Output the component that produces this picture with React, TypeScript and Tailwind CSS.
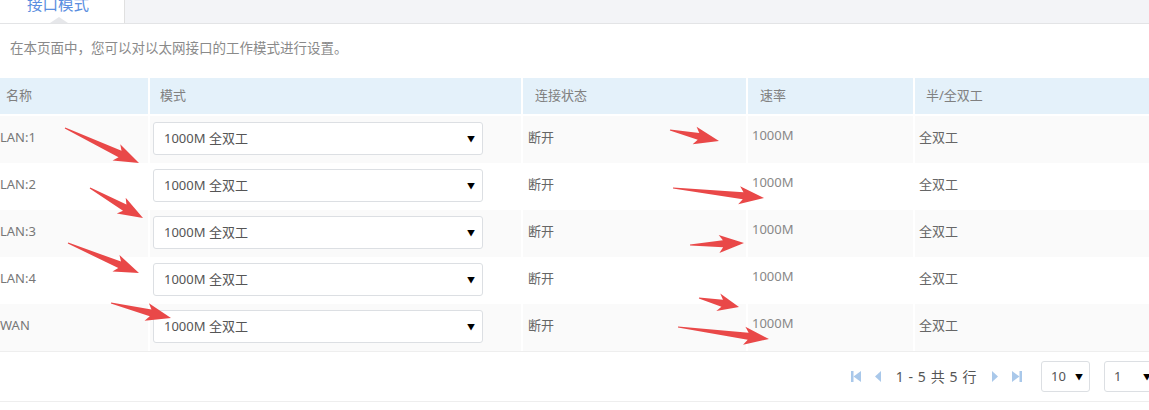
import React from "react";

const font = { fontFamily: '"Noto Sans", "Noto Sans CJK SC", sans-serif' };

const rows = ["LAN:1", "LAN:2", "LAN:3", "LAN:4", "WAN"];

// red annotation arrows drawn over the table: [tailX, tailY, tipX, tipY]
const arrows: [number, number, number, number][] = [
  [65, 128, 139, 163],
  [90, 188, 143, 218],
  [68, 243, 139, 273],
  [111, 303, 171, 318],
  [670, 130, 719, 141],
  [673, 188, 764, 198],
  [690, 245, 744, 243],
  [699, 298, 739, 307],
  [678, 327, 769, 339],
];

function arrowPoints(tx: number, ty: number, px: number, py: number) {
  const len = Math.hypot(px - tx, py - ty);
  const dx = (px - tx) / len;
  const dy = (py - ty) / len;
  const nx = -dy;
  const ny = dx;
  const h = Math.min(21, len * 0.42);
  const bx = px - dx * h;
  const by = py - dy * h;
  const cx = px - dx * (h + 4);
  const cy = py - dy * (h + 4);
  const pts = [
    [tx + nx * 0.6, ty + ny * 0.6],
    [bx + nx * 3.5, by + ny * 3.5],
    [cx + nx * 9, cy + ny * 9],
    [px, py],
    [cx - nx * 9, cy - ny * 9],
    [bx - nx * 3.5, by - ny * 3.5],
    [tx - nx * 0.6, ty - ny * 0.6],
  ];
  return pts.map(p => p.join(",")).join(" ");
}

function Select({ value, className }: { value: string; className: string }) {
  return (
    <div className={`flex items-center justify-between border border-[#dcdfe3] rounded-[3px] bg-white text-[13px] text-[#555] ${className}`}>
      <span>{value}</span>
      <span className="text-[8px] text-black">▼</span>
    </div>
  );
}

function PageIcon({ kind, className = "" }: { kind: "first" | "prev" | "next" | "last"; className?: string }) {
  const c = "#a9c8ea";
  return (
    <svg width="12" height="13" viewBox="0 0 12 13" className={className}>
      {kind === "first" && (
        <>
          <rect x="1" y="1" width="2.5" height="11" fill={c} />
          <polygon points="11,1 11,12 3.5,6.5" fill={c} />
        </>
      )}
      {kind === "prev" && <polygon points="9,1 9,12 3,6.5" fill={c} />}
      {kind === "next" && <polygon points="3,1 3,12 9,6.5" fill={c} />}
      {kind === "last" && (
        <>
          <rect x="8.5" y="1" width="2.5" height="11" fill={c} />
          <polygon points="1,1 1,12 8.5,6.5" fill={c} />
        </>
      )}
    </svg>
  );
}

export default function App() {
  return (
    <div className="relative w-[1149px] h-[410px] overflow-hidden bg-white" style={font}>
      {/* Tab bar */}
      <div className="flex h-[24px] bg-[#f3f4f7] border-b border-[#e3e4e6]">
        <div className="relative w-[125px] bg-white border-r border-[#e0e0e0] overflow-hidden">
          <div className="text-center text-[15.5px] leading-[20px] text-[#5a8ee0] -mt-[6px] pr-[8px]">接口模式</div>
          <div className="absolute left-[50px] bottom-0 w-0 h-0 border-x-[9px] border-x-transparent border-b-[6px] border-b-[#e6e7ea]" />
        </div>
      </div>

      <div className="pl-[10px] pt-[14px] h-[54px] text-[13.5px] text-[#8a8a8a]">在本页面中，您可以对以太网接口的工作模式进行设置。</div>

      {/* Table */}
      <div className="grid grid-cols-[148px_371px_223px_165px_1fr] gap-x-[2px] w-[1153px] text-[13px] text-[#666]">
        <div className="h-[36px] bg-[#e4f1fa] flex items-center pl-[6px] text-[#808080]">名称</div>
        <div className="h-[36px] bg-[#e4f1fa] flex items-center pl-[10px] text-[#808080]">模式</div>
        <div className="h-[36px] bg-[#e4f1fa] flex items-center pl-[12px] text-[#808080]">连接状态</div>
        <div className="h-[36px] bg-[#e4f1fa] flex items-center pl-[12px] text-[#808080]">速率</div>
        <div className="h-[36px] bg-[#e4f1fa] flex items-center pl-[11px] text-[#808080]">半/全双工</div>
        {rows.map((name, i) => {
          const bg = i % 2 === 0 ? "bg-[#fafafa]" : "bg-white";
          const top = i === 0 ? "mt-[2px]" : "";
          return (
            <React.Fragment key={name}>
              <div className={`h-[47px] ${bg} ${top} pt-[11px] leading-[20px] text-[#777]`}>{name}</div>
              <div className={`h-[47px] ${bg} ${top} pt-[6px] pl-[3px]`}>
                <Select value="1000M 全双工" className="w-[330px] h-[33px] pl-[10px] pr-[7px]" />
              </div>
              <div className={`h-[47px] ${bg} ${top} pt-[11px] pl-[5px] leading-[20px] text-[#666]`}>断开</div>
              <div className={`h-[47px] ${bg} ${top} pt-[9px] pl-[4px] leading-[20px] text-[#888]`}>1000M</div>
              <div className={`h-[47px] ${bg} ${top} pt-[11px] pl-[4px] leading-[20px] text-[#666]`}>全双工</div>
            </React.Fragment>
          );
        })}
      </div>

      {/* Pagination */}
      <div className="flex items-center justify-end h-[51px] border-t border-b border-[#eeeeee] text-[14px] text-[#555]">
        <div className="flex items-center mr-[18px]">
          <PageIcon kind="first" />
          <PageIcon kind="prev" className="ml-[10px]" />
          <span className="ml-[12px] tracking-[0.6px]">1 - 5 共 5 行</span>
          <PageIcon kind="next" className="ml-[12px]" />
          <PageIcon kind="last" className="ml-[10px]" />
        </div>
        <Select value="10" className="w-[49px] h-[31px] pl-[9px] pr-[6px] mr-[14px]" />
        <Select value="1" className="w-[52px] h-[31px] pl-[9px] pr-[4px] -mr-[7px]" />
      </div>

      {/* annotation arrows */}
      <svg className="absolute left-0 top-0 pointer-events-none" width="1149" height="410">
        {arrows.map((a, i) => (
          <polygon key={i} points={arrowPoints(...a)} fill="#e94848" />
        ))}
      </svg>
    </div>
  );
}
